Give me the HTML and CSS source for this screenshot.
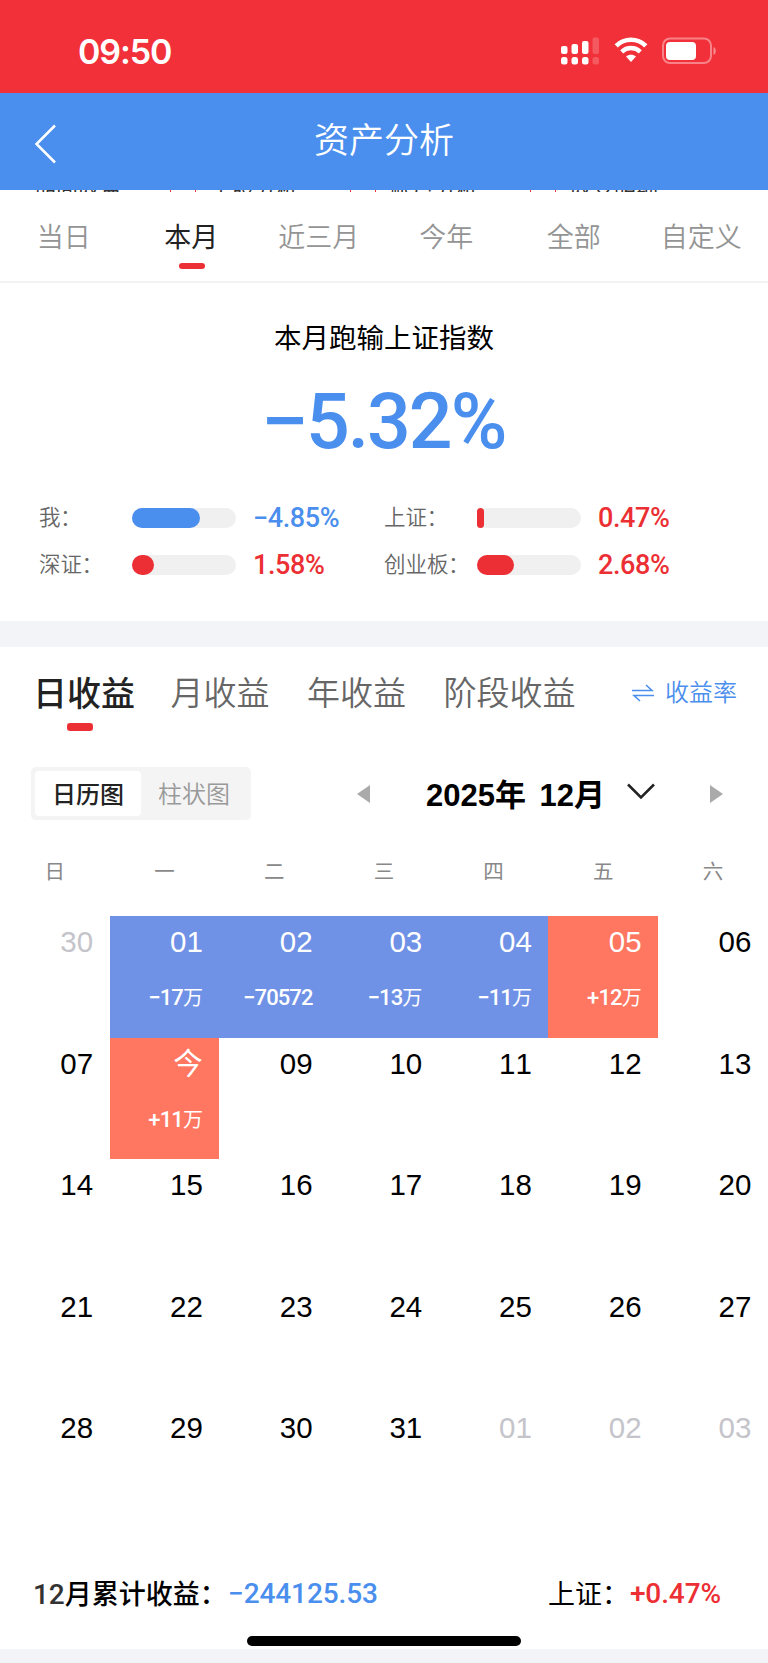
FILE: index.html
```html
<!DOCTYPE html>
<html lang="zh-CN">
<head>
    <meta charset="UTF-8">
    <meta name="viewport" content="width=device-width, initial-scale=1.0">
    <title>资产分析</title>
    <link rel="stylesheet" href="styles.css">
</head>
<body>
    <div class="status-bar">
        <span class="time">09:50</span>
        <div class="status-icons">
            <svg width="39" height="30" viewBox="0 0 39 30" fill="#fff">
                <rect x="0" y="9" width="6.500" height="8" rx="2"/>
                <rect x="10.500" y="7" width="6.500" height="10" rx="2"/>
                <rect x="21" y="4" width="6.500" height="13" rx="2"/>
                <rect x="31.500" y="0.500" width="6.500" height="16.500" rx="2" opacity=".2"/>
                <rect x="0" y="20" width="6.500" height="7.500" rx="2.500"/>
                <rect x="10.500" y="20" width="6.500" height="7.500" rx="2.500"/>
                <rect x="21" y="20" width="6.500" height="7.500" rx="2.500"/>
                <rect x="31.500" y="20" width="6.500" height="7.500" rx="2.500" opacity=".2"/>
            </svg>
            <svg width="34" height="26" viewBox="0 0 34 26" fill="none">
                <path d="M2.200 8.800C10.500.700 23.500.700 31.800 8.800" stroke="#fff" stroke-width="4.600"/>
                <path d="M7.700 14.800C13 9.800 21 9.800 26.300 14.800" stroke="#fff" stroke-width="4.400"/>
                <path d="M12 19.600C14.900 17 19.100 17 22 19.600L17 25z" fill="#fff"/>
            </svg>
            <svg width="55" height="28" viewBox="0 0 55 28" fill="none">
                <rect x="1" y="1.500" width="48" height="24.500" rx="7" stroke="#fff" stroke-opacity=".4" stroke-width="2"/>
                <rect x="4" y="5" width="30" height="18" rx="4" fill="#fff"/>
                <path d="M51.500 10c3 1.300 3 6.700 0 8z" fill="#fff" fill-opacity=".45"/>
            </svg>
        </div>
    </div>

    <header class="nav-bar">
        <svg class="back" width="24" height="40" viewBox="0 0 24 40" fill="none" stroke="#fff" stroke-width="2.500">
            <path d="M21 1.500L2.500 20L21 38.500"/>
        </svg>
        <h1>资产分析</h1>
    </header>

    <div class="section-strip">
        <span>期间收益</span><i></i>
        <span>个股分析</span><i></i>
        <span>账户分析</span><i></i>
        <span>收支明细</span>
    </div>

    <nav class="range-tabs">
        <span>当日</span>
        <span class="active">本月</span>
        <span>近三月</span>
        <span>今年</span>
        <span>全部</span>
        <span>自定义</span>
    </nav>

    <section class="summary">
        <h2>本月跑输上证指数</h2>
        <div class="big-value"><span class="minus">−</span>5.32%</div>
        <div class="compare">
            <div class="compare-item">
                <label>我<span class="colon">：</span></label>
                <div class="bar"><i class="down" style="width: 65%"></i></div>
                <span class="num blue">−4.85%</span>
            </div>
            <div class="compare-item">
                <label>上证<span class="colon">：</span></label>
                <div class="bar"><i class="up" style="width: 7%"></i></div>
                <span class="num red">0.47%</span>
            </div>
            <div class="compare-item">
                <label>深证<span class="colon">：</span></label>
                <div class="bar"><i class="up" style="width: 21%"></i></div>
                <span class="num red">1.58%</span>
            </div>
            <div class="compare-item">
                <label>创业板<span class="colon">：</span></label>
                <div class="bar"><i class="up" style="width: 36%"></i></div>
                <span class="num red">2.68%</span>
            </div>
        </div>
    </section>

    <section class="income">
        <div class="income-tabs">
            <span class="active">日收益</span>
            <span>月收益</span>
            <span>年收益</span>
            <span>阶段收益</span>
            <a class="switch">
                <svg width="22" height="18" viewBox="0 0 22 18" fill="none" stroke="#4a8eee" stroke-width="1.600">
                    <path d="M0 6.500H20L14 1"/>
                    <path d="M22 11.500H2L8 17"/>
                </svg>
                收益率
            </a>
        </div>

        <div class="toolbar">
            <div class="segment">
                <span class="on">日历图</span>
                <span>柱状图</span>
            </div>
            <div class="month-picker">
                <svg width="13" height="18" viewBox="0 0 13 18"><path d="M13 0V18L0 9z" fill="#aaa"/></svg>
                <span class="month">2025年 12月</span>
                <svg class="arrow" width="28" height="17" viewBox="0 0 28 17" fill="none" stroke="#222" stroke-width="2.500"><path d="M1 1.500L14 14.500L27 1.500"/></svg>
                <svg width="13" height="18" viewBox="0 0 13 18"><path d="M0 0V18L13 9z" fill="#aaa"/></svg>
            </div>
        </div>

        <div class="weekdays">
            <span>日</span><span>一</span><span>二</span><span>三</span><span>四</span><span>五</span><span>六</span>
        </div>

        <div class="calendar">
            <div class="day other">30</div>
            <div class="day loss">01<small>−17<b>万</b></small></div>
            <div class="day loss">02<small>−70572</small></div>
            <div class="day loss">03<small>−13<b>万</b></small></div>
            <div class="day loss">04<small>−11<b>万</b></small></div>
            <div class="day gain">05<small>+12<b>万</b></small></div>
            <div class="day">06</div>
            <div class="day">07</div>
            <div class="day gain">今<small>+11<b>万</b></small></div>
            <div class="day">09</div>
            <div class="day">10</div>
            <div class="day">11</div>
            <div class="day">12</div>
            <div class="day">13</div>
            <div class="day">14</div>
            <div class="day">15</div>
            <div class="day">16</div>
            <div class="day">17</div>
            <div class="day">18</div>
            <div class="day">19</div>
            <div class="day">20</div>
            <div class="day">21</div>
            <div class="day">22</div>
            <div class="day">23</div>
            <div class="day">24</div>
            <div class="day">25</div>
            <div class="day">26</div>
            <div class="day">27</div>
            <div class="day">28</div>
            <div class="day">29</div>
            <div class="day">30</div>
            <div class="day">31</div>
            <div class="day other">01</div>
            <div class="day other">02</div>
            <div class="day other">03</div>
        </div>

        <div class="total">
            <span class="total-label"><span class="num">12</span>月累计收益：</span>
            <span class="num blue">−244125.53</span>
            <span class="index-label">上证：</span>
            <span class="num red">+0.47%</span>
        </div>
    </section>

    <div class="home-indicator"></div>
</body>
</html>
```
FILE: styles.css
```css
* {
    margin: 0;
    padding: 0;
    box-sizing: border-box;
}

body {
    width: 768px;
    height: 1663px;
    overflow: hidden;
    background: #f2f4f8;
    font-family: "Liberation Sans", "Noto Sans CJK SC", sans-serif;
    color: #000;
}

svg {
    display: block;
    flex: none;
}

.num,
.big-value,
.day small {
    font-family: Roboto, "Noto Sans CJK SC", sans-serif;
    font-weight: 500;
}

.blue {
    color: #4a8eee;
}

.red {
    color: #ec2f34;
}

/* status bar */
.status-bar {
    display: flex;
    justify-content: space-between;
    height: 93px;
    padding: 37px 51px 0 78px;
    background: #f23039;
    color: #fff;
}

.time {
    font-family: Inter, sans-serif;
    font-size: 34px;
    font-weight: 600;
    line-height: 30px;
    letter-spacing: -1.1px;
}

.status-icons {
    display: flex;
    gap: 14px;
}

/* header */
.nav-bar {
    position: relative;
    height: 97px;
    background: #4a8eee;
    color: #fff;
    text-align: center;
}

.nav-bar h1 {
    font-size: 35px;
    font-weight: 350;
    line-height: 96px;
}

.back {
    position: absolute;
    left: 34px;
    top: 31px;
}

.section-strip {
    display: flex;
    height: 2px;
    padding-left: 34px;
    overflow: hidden;
    background: #fff;
    color: #333;
    font-size: 22px;
    line-height: 0;
}

.section-strip span {
    width: 154px;
    padding-left: 14px;
}

.section-strip span:first-child {
    width: 136px;
    padding-left: 0;
}

.section-strip i {
    width: 26px;
    border: solid #ec2f34;
    border-width: 0 1px;
}

/* range tabs */
.range-tabs {
    display: grid;
    grid-template-columns: repeat(6, 1fr);
    height: 91px;
    padding-right: 3px;
    background: #fff;
    border-bottom: 2px solid #f2f2f2;
    color: #949494;
    font-size: 27px;
    font-weight: 350;
    line-height: 93px;
    text-align: center;
}

.range-tabs .active,
.income-tabs .active {
    position: relative;
    color: #222;
    font-weight: 400;
}

.range-tabs .active::after,
.income-tabs .active::after {
    content: "";
    position: absolute;
    left: 50%;
    top: 71px;
    width: 26px;
    height: 6px;
    margin-left: -12px;
    border-radius: 3px;
    background: #ec2f34;
}

/* summary */
.summary {
    height: 338px;
    padding: 36px 39px 0;
    background: #fff;
    text-align: center;
}

.summary h2 {
    font-size: 27.5px;
    font-weight: 400;
    line-height: 40px;
}

.big-value {
    margin-top: 18px;
    color: #4a8eee;
    font-size: 77px;
    line-height: 90px;
    letter-spacing: -2px;
}

.minus {
    display: inline-block;
    margin-right: 2px;
    transform: scaleX(1.12);
}

.compare {
    display: grid;
    grid-template-columns: 345px 345px;
    grid-auto-rows: 47px;
    margin-top: 27px;
    text-align: left;
}

.compare-item {
    display: flex;
    align-items: center;
}

.compare label {
    width: 93px;
    color: #666;
    font-size: 21.5px;
    font-weight: 350;
    line-height: 30px;
    white-space: nowrap;
}

.colon {
    margin-left: -0.5px;
}

.bar {
    width: 104px;
    height: 20px;
    margin-right: 17px;
    border-radius: 10px;
    background: #f0f0f0;
}

.bar i {
    display: block;
    height: 100%;
    border-radius: 10px;
}

.bar .down {
    background: #4a8eee;
}

.bar .up {
    background: #ec2f34;
}

.compare .num {
    font-size: 27px;
    line-height: 32px;
    letter-spacing: -0.4px;
}

/* income */
.income {
    height: 1002px;
    margin-top: 26px;
    background: #fff;
}

.income-tabs {
    display: flex;
    gap: 37.5px;
    height: 92px;
    padding: 0 31px 0 33px;
    color: #666;
    font-size: 33px;
    font-weight: 350;
    line-height: 94px;
    white-space: nowrap;
}

.income-tabs .active {
    width: 100px;
    font-size: 34px;
    font-weight: 500;
}

.income-tabs .active::after {
    left: 34px;
    top: 76px;
    height: 8px;
    margin-left: 0;
}

.switch {
    display: flex;
    align-items: center;
    gap: 11px;
    margin-left: auto;
    color: #4a8eee;
    font-size: 24px;
    line-height: 92px;
}

.toolbar {
    display: flex;
    align-items: center;
    height: 53px;
    margin-top: 28px;
    padding: 0 45px 0 31px;
}

.segment {
    display: flex;
    width: 220px;
    height: 53px;
    padding: 4px;
    border-radius: 5px;
    background: #f4f4f4;
    color: #999;
    font-size: 24px;
    font-weight: 350;
    line-height: 47px;
    text-align: center;
}

.segment span {
    flex: 1;
}

.segment .on {
    border-radius: 4px;
    background: #fff;
    color: #222;
    font-weight: 500;
}

.month-picker {
    display: flex;
    align-items: center;
    flex: 1;
    margin-left: 106px;
}

.month {
    margin-left: 56px;
    padding-bottom: 3px;
    font-size: 31px;
    font-weight: 700;
    word-spacing: 5px;
    white-space: pre;
}

.arrow {
    margin: -4px auto 0 22px;
}

.weekdays,
.calendar {
    display: grid;
    grid-template-columns: repeat(7, 109.7px);
}

.weekdays {
    height: 96px;
    padding: 37px 0 0;
    color: #888;
    font-size: 20.5px;
    line-height: 30px;
    text-align: center;
}

.calendar {
    grid-auto-rows: 121.6px;
}

.day {
    padding: 9px 16.5px 0 0;
    font-size: 29.5px;
    line-height: 34px;
    font-kerning: none;
    text-align: right;
}

.day.other {
    color: #c4c4ca;
}

.day.loss {
    background: #6f92e6;
    color: #fff;
}

.day.gain {
    background: #ff7661;
    color: #fff;
}

.day small {
    display: block;
    margin-top: 23px;
    font-size: 22px;
    line-height: 32px;
    letter-spacing: -0.9px;
}

.day small b {
    font-size: 20px;
    font-weight: 400;
    letter-spacing: 0;
}

.total {
    display: flex;
    align-items: center;
    height: 40px;
    margin-top: 50px;
    padding: 0 47px 0 33px;
    font-size: 27px;
}

.total .num {
    font-size: 28px;
    letter-spacing: -0.1px;
}

.total-label {
    width: 195px;
    padding-bottom: 2px;
    font-weight: 500;
    white-space: nowrap;
}

.total-label .num {
    color: #333;
}

.index-label {
    width: 82px;
    margin-left: auto;
    padding-bottom: 2px;
}

.home-indicator {
    position: absolute;
    left: 247px;
    top: 1636px;
    width: 274px;
    height: 10px;
    border-radius: 5px;
    background: #000;
}
```
